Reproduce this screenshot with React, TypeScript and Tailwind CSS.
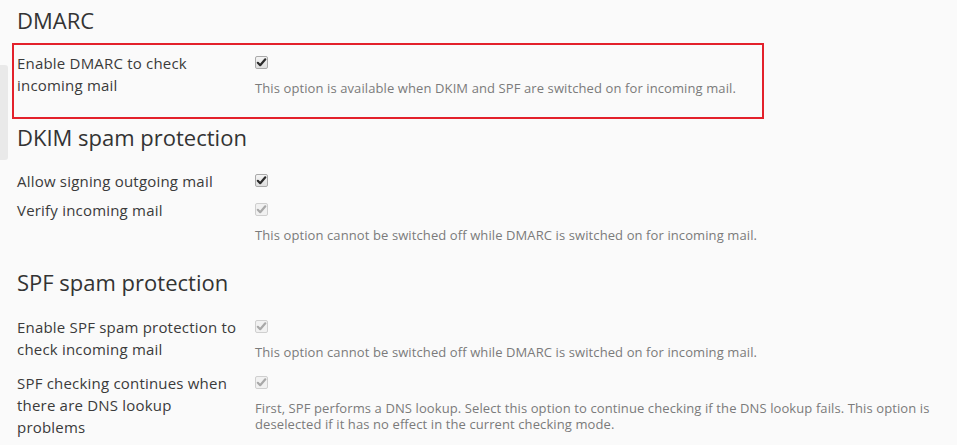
import React from "react";

function Check({ disabled }: { disabled?: boolean }) {
  return (
    <span
      className={
        "inline-flex h-[13px] w-[13px] items-center justify-center rounded-[2px] border " +
        (disabled
          ? "border-[#cfcfcf] bg-[#f1f1f1]"
          : "border-[#a9a9a9] bg-gradient-to-b from-[#f4f4f4] to-[#dedede]")
      }
    >
      <svg width="11" height="11" viewBox="0 0 11 11">
        <path
          d="M1.8 5.8 L4.2 8.2 L9.3 2.3"
          fill="none"
          stroke={disabled ? "#a8a8a8" : "#2b2b2b"}
          strokeWidth="2.2"
          strokeLinecap="round"
          strokeLinejoin="round"
        />
      </svg>
    </span>
  );
}

function Row({
  label,
  desc,
  disabled,
  className = "",
}: {
  label: React.ReactNode;
  desc?: React.ReactNode;
  disabled?: boolean;
  className?: string;
}) {
  return (
    <div className={"grid grid-cols-[238px_1fr] " + className}>
      <div className="pr-[14px] text-[15px] leading-[22px] tracking-[0.2px] text-[#3b3b3b]">{label}</div>
      <div>
        <div className="flex h-[22px] items-center pb-[2px]">
          <Check disabled={disabled} />
        </div>
        {desc && (
          <div className="mt-[6px] text-[13px] leading-[16px] tracking-[0.1px] text-[#7b7b7b]">{desc}</div>
        )}
      </div>
    </div>
  );
}

export default function App() {
  return (
    <div className="relative min-h-screen w-[957px] h-[445px] overflow-hidden bg-[#fafafa] pl-[17px] pr-[22px] font-['Open_Sans',sans-serif]">
      <div className="absolute left-0 top-[65px] h-[95px] w-[8px] rounded-r-[3px] bg-[#e9e9e9]" />
      <h2 className="pt-[8px] text-[22px] leading-[24px] text-[#333]">DMARC</h2>
      <div className="relative -ml-[5px] mt-[11px] h-[76px] w-[752px] border-2 border-[#e3212b] pl-[3px] pt-[7px]">
        <Row
          label={
            <>
              Enable DMARC to check
              <br />
              incoming mail
            </>
          }
          desc="This option is available when DKIM and SPF are switched on for incoming mail."
        />
      </div>
      <h2 className="mt-[6px] text-[22px] leading-[24px] text-[#333]">DKIM spam protection</h2>
      <Row className="mt-[21px]" label="Allow signing outgoing mail" />
      <Row
        className="mt-[7px]"
        label="Verify incoming mail"
        disabled
        desc="This option cannot be switched off while DMARC is switched on for incoming mail."
      />
      <h2 className="mt-[27px] text-[22px] leading-[24px] text-[#333]">SPF spam protection</h2>
      <Row
        className="mt-[22px]"
        label="Enable SPF spam protection to check incoming mail"
        disabled
        desc="This option cannot be switched off while DMARC is switched on for incoming mail."
      />
      <Row
        className="mt-[12px]"
        label="SPF checking continues when there are DNS lookup problems"
        disabled
        desc="First, SPF performs a DNS lookup. Select this option to continue checking if the DNS lookup fails. This option is deselected if it has no effect in the current checking mode."
      />
    </div>
  );
}
